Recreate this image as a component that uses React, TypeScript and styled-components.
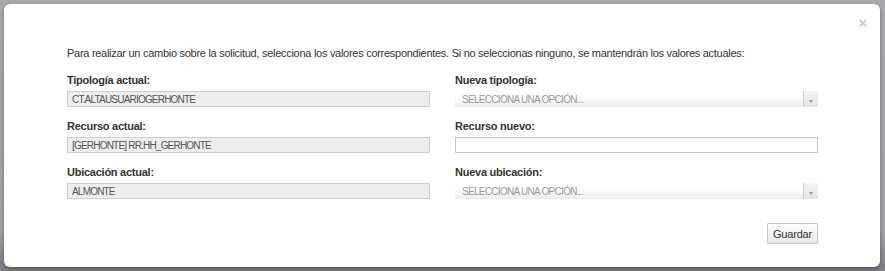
import React from 'react';
import styled, { createGlobalStyle } from 'styled-components';

const GlobalStyle = createGlobalStyle`
  html, body {
    margin: 0;
    padding: 0;
    background: #a3a5aa;
  }
  body {
    font-family: Arial, "Liberation Sans", Helvetica, sans-serif;
  }
`;

const Backdrop = styled.div`
  width: 885px;
  height: 271px;
  box-sizing: border-box;
  padding: 4px 5px 4px 4px;
  background: linear-gradient(#a7a9ad, #a2a4a8 85%, #7f8187 98%);
`;

const Modal = styled.div`
  width: 876px;
  height: 263px;
  box-sizing: border-box;
  background: #fff;
  border-radius: 6px;
  box-shadow: 0 2px 4px rgba(0, 0, 0, 0.35);
  display: flex;
  flex-direction: column;
`;

const Header = styled.div`
  height: 42px;
  box-sizing: border-box;
  display: flex;
  justify-content: flex-end;
  padding: 12px 10px 0 0;
`;

const Close = styled.button`
  border: 0;
  background: none;
  padding: 0;
  width: 14px;
  height: 14px;
  font-family: Arial, "Liberation Sans", sans-serif;
  font-size: 15px;
  font-weight: bold;
  line-height: 14px;
  color: #c8c8c8;
  cursor: pointer;
`;

const Body = styled.div`
  padding: 0 62px 0 63px;
  color: #333;
  font-size: 11px;
`;

const Intro = styled.p`
  margin: 0 0 14px;
  line-height: 14px;
  font-size: 11px;
  letter-spacing: -0.28px;
  color: #333;
`;

const Grid = styled.div`
  display: grid;
  grid-template-columns: 1fr 1fr;
  column-gap: 25px;
`;

const Field = styled.div`
  margin-bottom: 13px;
`;

const Label = styled.label`
  display: block;
  font-weight: bold;
  font-size: 11px;
  line-height: 13px;
  letter-spacing: -0.25px;
  color: #333;
  margin-bottom: 4px;
`;

const Input = styled.input<{ $readOnly?: boolean }>`
  display: block;
  width: 100%;
  height: 16px;
  box-sizing: border-box;
  margin: 0;
  padding: 0 4px;
  border: 1px solid ${p => (p.$readOnly ? '#cfcfcf' : '#c8c8c8')};
  background: ${p => (p.$readOnly ? '#eeeeee' : '#fff')};
  font-family: Arial, "Liberation Sans", sans-serif;
  font-size: 10px;
  letter-spacing: -0.8px;
  color: #555;
  outline: none;
`;

const Select = styled.div`
  display: flex;
  align-items: center;
  height: 16px;
  background: linear-gradient(#ffffff 30%, #ececec);
`;

const Placeholder = styled.span`
  flex: 1;
  padding-left: 7px;
  font-size: 10px;
  letter-spacing: -0.7px;
  color: #999;
  white-space: nowrap;
`;

const Arrow = styled.span`
  width: 15px;
  height: 16px;
  box-sizing: border-box;
  border-left: 1px solid #d0d0d0;
  background: linear-gradient(#f4f4f4, #e4e4e4);
  display: flex;
  align-items: center;
  justify-content: center;
  padding-top: 4px;

  &::after {
    content: '';
    border-left: 2px solid transparent;
    border-right: 2px solid transparent;
    border-top: 3px solid #999;
  }
`;

const Footer = styled.div`
  display: flex;
  justify-content: flex-end;
  margin-top: 11px;
`;

const Button = styled.button`
  width: 51px;
  height: 21px;
  box-sizing: border-box;
  border: 1px solid #c6c6c6;
  border-radius: 1px;
  background: linear-gradient(#ffffff, #e8e8e8);
  font-family: Arial, "Liberation Sans", sans-serif;
  font-size: 11px;
  letter-spacing: -0.2px;
  color: #333;
  padding: 0;
`;

const SelectBox = ({ placeholder }: { placeholder: string }) => (
  <Select>
    <Placeholder>{placeholder}</Placeholder>
    <Arrow />
  </Select>
);

export default function App() {
  return (
    <>
      <GlobalStyle />
      <Backdrop>
        <Modal>
          <Header>
            <Close aria-label="Cerrar">×</Close>
          </Header>
          <Body>
            <Intro>
              Para realizar un cambio sobre la solicitud, selecciona los valores correspondientes. Si no
              seleccionas ninguno, se mantendrán los valores actuales:
            </Intro>
            <Grid>
              <Field>
                <Label>Tipología actual:</Label>
                <Input $readOnly readOnly value="CT.ALTAUSUARIOGERHONTE" />
              </Field>
              <Field>
                <Label>Nueva tipología:</Label>
                <SelectBox placeholder="SELECCIONA UNA OPCIÓN..." />
              </Field>
              <Field>
                <Label>Recurso actual:</Label>
                <Input $readOnly readOnly value="[GERHONTE] RR.HH_GERHONTE" />
              </Field>
              <Field>
                <Label>Recurso nuevo:</Label>
                <Input defaultValue="" />
              </Field>
              <Field>
                <Label>Ubicación actual:</Label>
                <Input $readOnly readOnly value="ALMONTE" />
              </Field>
              <Field>
                <Label>Nueva ubicación:</Label>
                <SelectBox placeholder="SELECCIONA UNA OPCIÓN..." />
              </Field>
            </Grid>
            <Footer>
              <Button>Guardar</Button>
            </Footer>
          </Body>
        </Modal>
      </Backdrop>
    </>
  );
}
